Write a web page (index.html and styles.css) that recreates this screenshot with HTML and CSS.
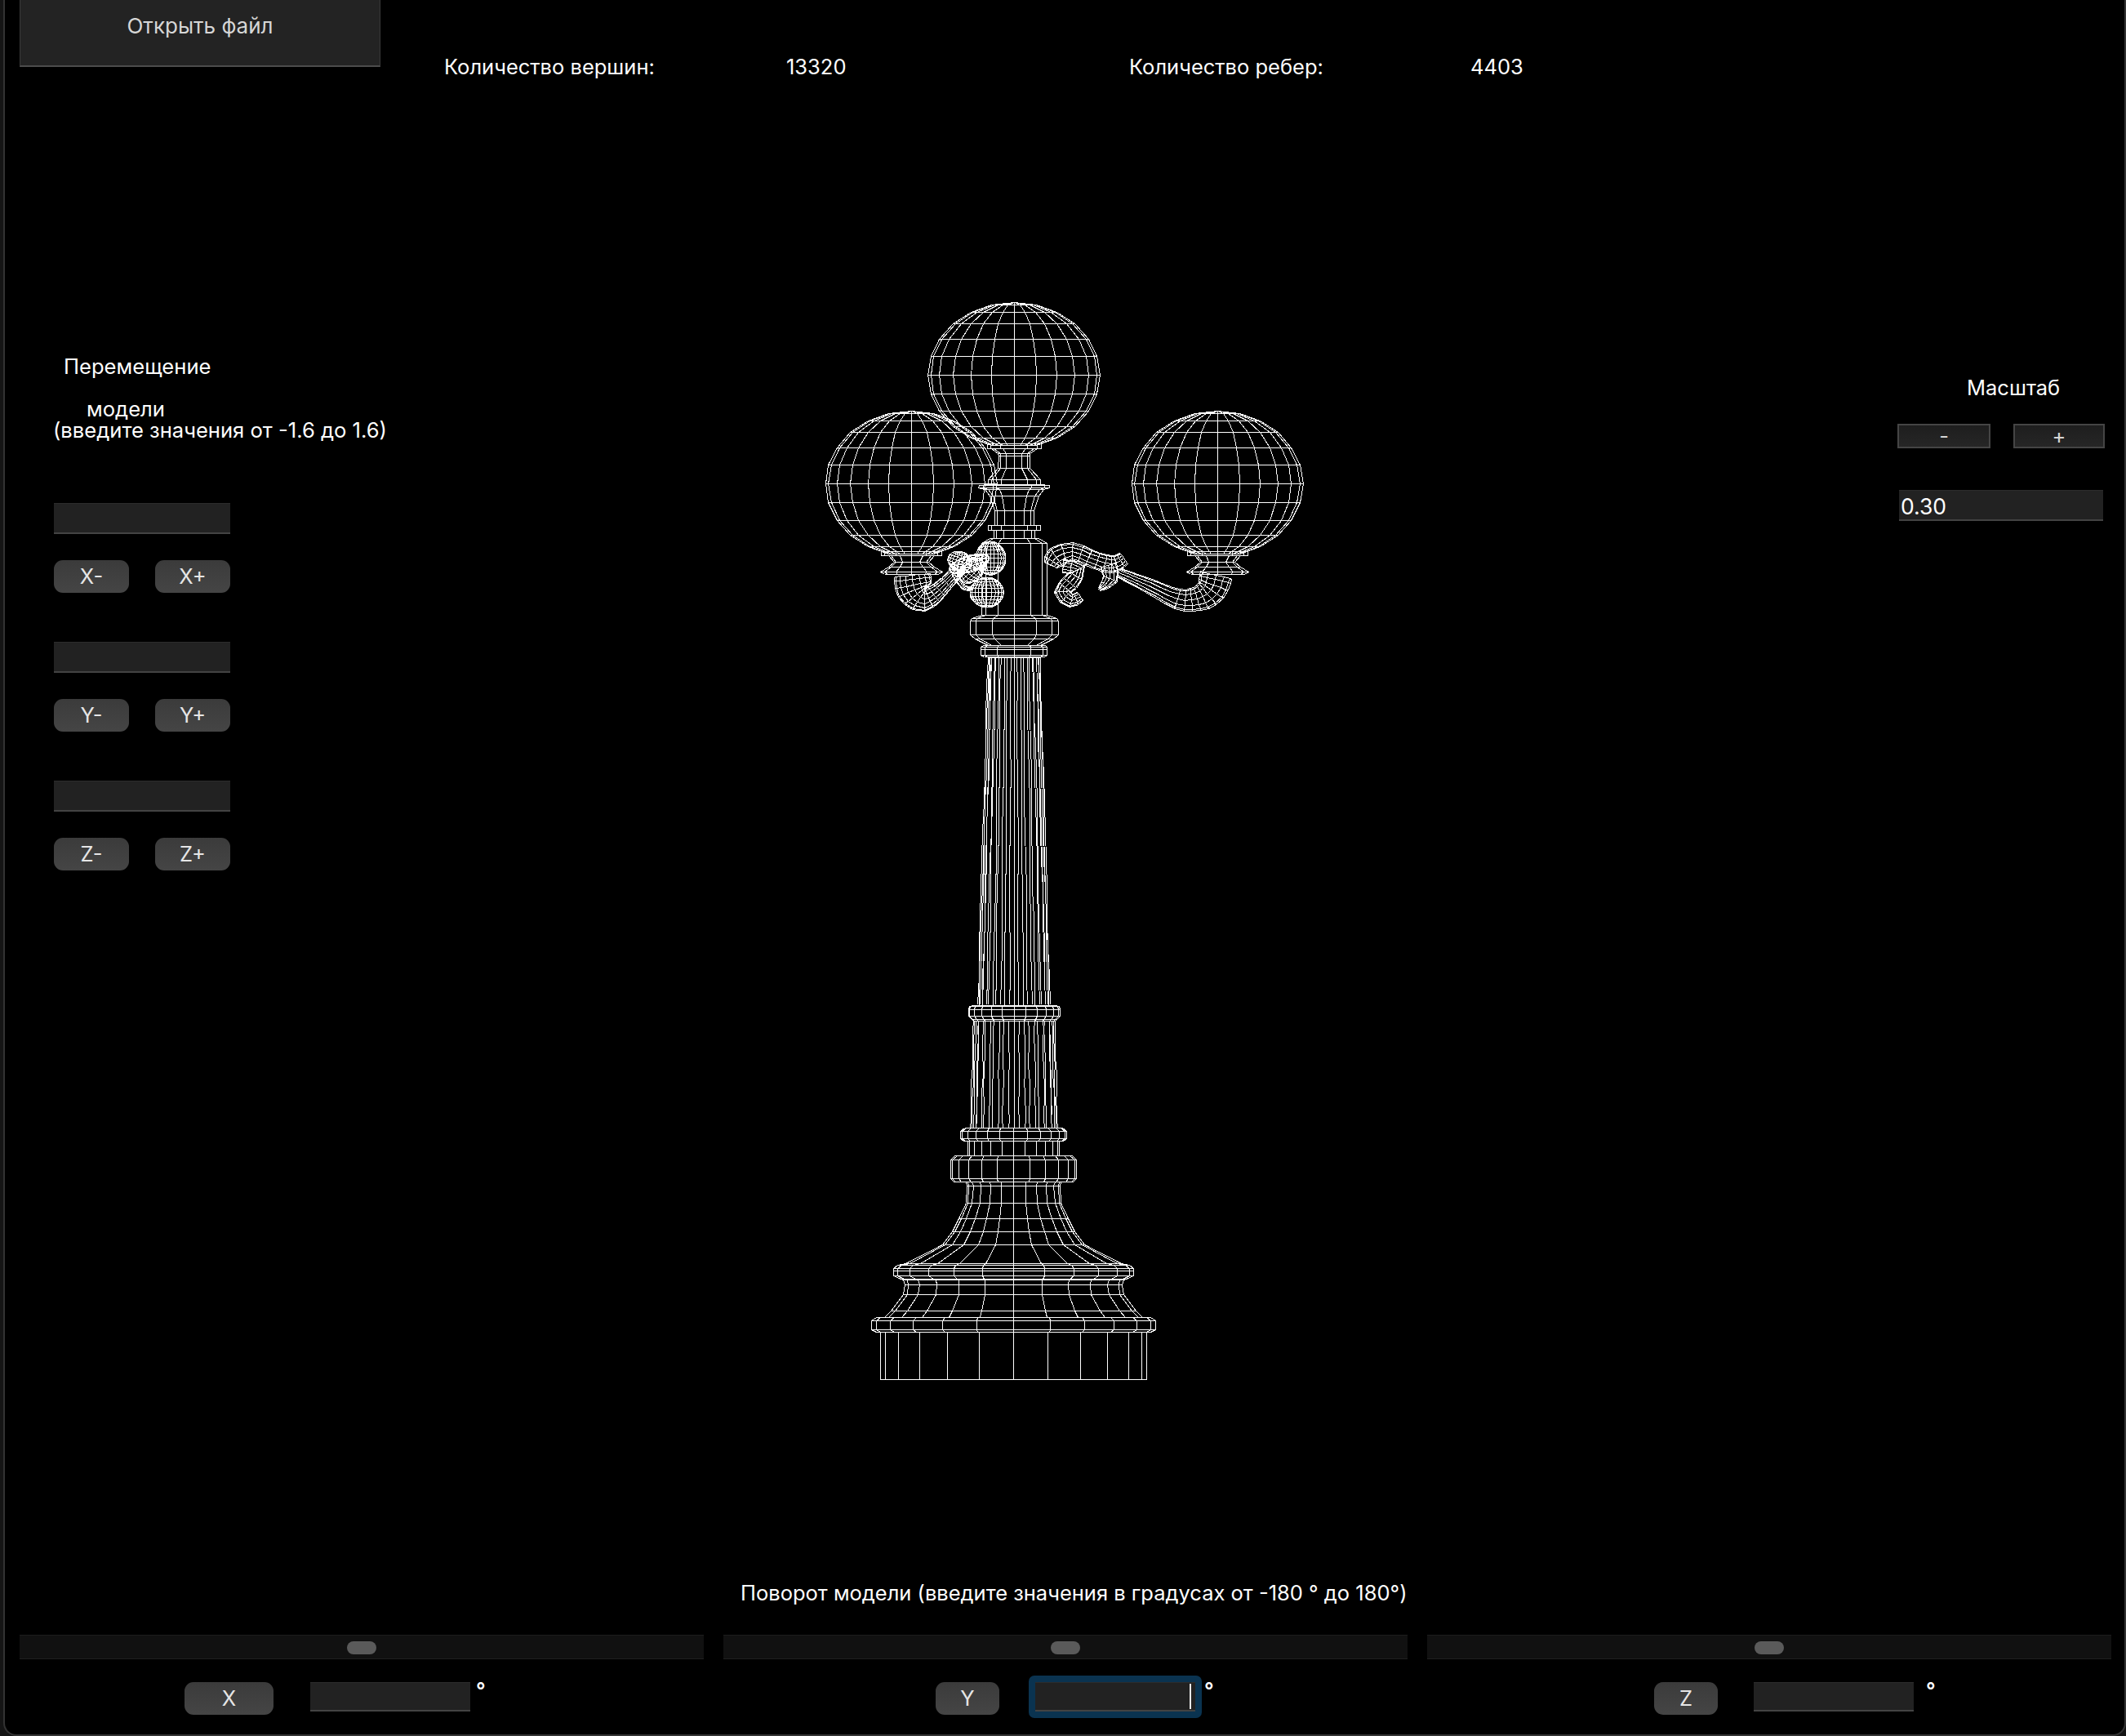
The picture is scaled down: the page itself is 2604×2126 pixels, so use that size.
FILE: index.html
```html
<!DOCTYPE html>
<html lang="ru">
<head>
<meta charset="utf-8">
<title>Просмотр модели</title>
<link rel="stylesheet" href="styles.css">
</head>
<body>
<div class="window">
  <header class="top">
    <button class="open-btn">Открыть файл</button>
    <div class="stats">
      <span>Количество вершин:</span>
      <span>13320</span>
      <span>Количество ребер:</span>
      <span>4403</span>
    </div>
  </header>

  <main class="main">
    <section class="move">
      <div class="move-title-a">Перемещение</div>
      <div class="move-title-b">модели</div>
      <div class="move-title-c">(введите значения от -1.6 до 1.6)</div>
      <div class="move-groups">
        <div class="move-group">
          <input class="field field-move" type="text">
          <div class="pair"><button class="key">X-</button><button class="key">X+</button></div>
        </div>
        <div class="move-group">
          <input class="field field-move" type="text">
          <div class="pair"><button class="key">Y-</button><button class="key">Y+</button></div>
        </div>
        <div class="move-group">
          <input class="field field-move" type="text">
          <div class="pair"><button class="key">Z-</button><button class="key">Z+</button></div>
        </div>
      </div>
    </section>

    <svg class="viewport" viewBox="980 350 640 1400" width="640" height="1400">
      <path id="wire" class="wire" d=""></path>
    </svg>

    <section class="scale">
      <div class="scale-title">Масштаб</div>
      <div class="scale-btns">
        <button class="flat-btn flat-minus">-</button>
        <button class="flat-btn flat-plus">+</button>
      </div>
      <input class="field field-scale" type="text" value="0.30">
    </section>
  </main>

  <footer class="rotate">
    <div class="rotate-title">Поворот модели (введите значения в градусах от -180 ° до 180°)</div>
    <div class="rotate-cols">
      <div class="rotate-col">
        <div class="track"><span class="thumb"></span></div>
        <div class="rotate-row row-x">
          <button class="key key-x">X</button>
          <input class="field field-rot" type="text">
          <span class="deg">°</span>
        </div>
      </div>
      <div class="rotate-col">
        <div class="track"><span class="thumb"></span></div>
        <div class="rotate-row row-y">
          <button class="key key-yz">Y</button>
          <span class="focus-ring">
            <input class="field field-rot" type="text">
            <span class="caret"></span>
          </span>
          <span class="deg">°</span>
        </div>
      </div>
      <div class="rotate-col">
        <div class="track"><span class="thumb"></span></div>
        <div class="rotate-row row-z">
          <button class="key key-yz">Z</button>
          <input class="field field-rot" type="text">
          <span class="deg">°</span>
        </div>
      </div>
    </div>
  </footer>
</div>
<script src="script.js"></script>
</body>
</html>
```
FILE: styles.css
```css
* { box-sizing: border-box; }
html, body { margin: 0; padding: 0; }
body {
  background: #151515;
  width: 2604px;
  height: 2126px;
  overflow: hidden;
  padding-left: 4px;
  font-family: "Inter", "Liberation Sans", sans-serif;
  font-size: 25.5px;
  color: #fff;
}
button, input { font-family: inherit; font-size: inherit; margin: 0; outline: none; }

.window {
  width: 2600px;
  height: 2126px;
  background: #000;
  border: 2px solid #333;
  border-top: 0;
  border-radius: 0 0 16px 16px;
  overflow: hidden;
}

/* top */
.top { display: flex; height: 148px; padding-left: 18px; }
.open-btn {
  width: 442px;
  height: 82px;
  background: #232323;
  color: #d6d6d6;
  border: 0;
  border-left: 1px solid #3a3a3a;
  border-right: 1px solid #3a3a3a;
  border-bottom: 2px solid #4c4c4c;
  padding: 0 0 18px;
  font-size: 26px;
}
.stats {
  display: grid;
  grid-template-columns: 419px 420px 418px auto;
  margin-left: 78px;
  height: 82px;
  padding-top: 67px;
  line-height: 30px;
}

/* main */
.main { display: grid; grid-template-columns: 974px 640px 982px; height: 1780px; }
.move { padding: 288px 0 0 60px; line-height: 26px; font-size: 25.6px; }
.move-title-a { margin-left: 12px; }
.move-title-b { margin: 26px 0 0 40px; }
.move-title-c { margin: 0 0 0 -1px; }
.move-groups { display: flex; flex-direction: column; gap: 60px; margin-top: 76px; font-size: 25.5px; }
.move-group { display: flex; flex-direction: column; gap: 32px; width: 216px; }
.pair { display: flex; justify-content: space-between; }

.field {
  display: block;
  background: #222;
  border: 0;
  border-top: 1px solid #2c2c2c;
  border-bottom: 2px solid #434343;
  color: #fff;
  padding: 0 2px;
  height: 38px;
}
.field-move { width: 216px; }
.field-rot { width: 196px; height: 36px; flex: none; }
.field-scale { width: 250px; margin-left: 2px; margin-top: 51px; font-size: 26.5px; padding-top: 2px; }

.key {
  width: 92px;
  height: 40px;
  background: linear-gradient(#3b3b3b, #454545);
  color: #e6e6e6;
  border: 0;
  border-radius: 11px;
  padding: 0;
  line-height: 38px;
}
.key-x { width: 109px; flex: none; }
.key-yz { width: 78px; flex: none; }

.viewport { display: block; margin-top: 202px; }
.wire { fill: none; stroke: #fff; stroke-width: 1; shape-rendering: crispEdges; }

.scale { padding: 314px 0 0 704px; line-height: 26px; }
.scale-title { margin-left: 85px; }
.scale-btns { display: flex; gap: 28px; margin-top: 31px; }
.flat-btn {
  height: 30px;
  background: linear-gradient(#1e1e1e, #262626);
  border: 2px solid #454545;
  color: #d6d6d6;
  padding: 0;
  line-height: 26px;
}
.flat-minus { width: 114px; }
.flat-plus { width: 112px; }

/* bottom */
.rotate { padding: 0 10px 0 18px; }
.rotate-title { height: 46px; line-height: 46px; padding-left: 883px; margin-bottom: 28px; white-space: nowrap; }
.rotate-cols { display: grid; grid-template-columns: repeat(3, 838px); gap: 24px; }
.track {
  display: flex;
  justify-content: center;
  padding-top: 7px;
  height: 30px;
  background: #111;
  border-top: 1px solid #1c1c1c;
  border-bottom: 1px solid #1f1f1f;
}
.thumb { width: 36px; height: 16px; background: #5a5a5a; border-radius: 8px; }
.rotate-row { display: flex; align-items: flex-start; margin-top: 28px; line-height: 26px; }
.deg { margin-top: -3px; font-weight: 600; }
.row-x { padding-left: 202px; }
.row-x .field-rot { margin-left: 45px; }
.row-x .deg { margin-left: 7px; }
.row-y { padding-left: 260px; }
.row-y .deg { margin-left: 3px; }
.row-z { padding-left: 278px; }
.row-z .field-rot { margin-left: 44px; }
.row-z .deg { margin-left: 15px; }
.focus-ring {
  display: block;
  position: relative;
  flex: none;
  width: 212px;
  height: 52px;
  margin: -8px 0 0 36px;
  padding: 8px 7px 8px 8px;
  background: #0a3350;
  border-radius: 7px;
}
.caret { position: absolute; left: 197px; top: 10px; width: 2px; height: 31px; background: #e8e8e8; }
```
FILE: script.js
```js
// Wireframe of the lamp model, projected orthographically.
var d = [];
var cx = 1241.5;
function q(v) { return Math.round(v) + 0.5; }
function poly(pts) {
  var s = '';
  for (var i = 0; i < pts.length; i++) {
    s += (i ? 'L' : 'M') + q(pts[i][0]) + ' ' + q(pts[i][1]);
  }
  d.push(s);
}
// profile: [y, r]; n: segments round the axis
function lathe(c, prof, n) {
  var i, k;
  for (i = 0; i < prof.length; i++) {
    poly([[c - prof[i][1], prof[i][0]], [c + prof[i][1], prof[i][0]]]);
  }
  var half = n / 2;
  for (k = -half / 2; k <= half / 2; k++) {
    var s = Math.sin(k * 2 * Math.PI / n);
    var line = [];
    for (i = 0; i < prof.length; i++) {
      line.push([c + prof[i][1] * s, prof[i][0]]);
    }
    poly(line);
  }
}
// fluted shaft: the flute lines wander slightly along their length
function flutes(c, y0, r0, y1, r1, n) {
  var half = n / 2, steps = 12;
  for (var k = -half / 2; k <= half / 2; k++) {
    var s = Math.sin(k * 2 * Math.PI / n);
    var f = Math.abs(k) % 2 === 1 ? 0.94 : 1;
    var line = [];
    for (var i = 0; i <= steps; i++) {
      var t = i / steps;
      var w = (k === 0 || i === 0 || i === steps) ? 0 : Math.sin(i * 0.9 + k * 2.3) * 0.55;
      line.push([c + (r0 + (r1 - r0) * t) * s * f + w, y0 + (y1 - y0) * t]);
    }
    poly(line);
  }
  poly([[c - r0, y0], [c + r0, y0]]);
}
function sphere(c, cy, rx, ry) {
  var prof = [];
  for (var lat = 90; lat >= -75; lat -= 15) {
    var a = lat * Math.PI / 180;
    prof.push([cy - ry * Math.sin(a), rx * Math.cos(a)]);
  }
  lathe(c, prof, 24);
}
function cr(a, b, c, e, t) {
  return 0.5 * (2 * b + (c - a) * t + (2 * a - 5 * b + 4 * c - e) * t * t + (3 * b - a - 3 * c + e) * t * t * t);
}
// tube along a spline; control points [x, y, r]
function tube(pts, nLong, sub, crossFrom) {
  var samples = [], i, j, m;
  for (i = 0; i < pts.length - 1; i++) {
    var p0 = pts[Math.max(i - 1, 0)], p1 = pts[i], p2 = pts[i + 1], p3 = pts[Math.min(i + 2, pts.length - 1)];
    for (j = 0; j < sub; j++) {
      var t = j / sub;
      samples.push([cr(p0[0], p1[0], p2[0], p3[0], t), cr(p0[1], p1[1], p2[1], p3[1], t), cr(p0[2], p1[2], p2[2], p3[2], t), i]);
    }
  }
  var last = pts[pts.length - 1];
  samples.push([last[0], last[1], last[2], pts.length - 1]);
  var rings = samples.map(function (p, idx) {
    var a = samples[Math.max(idx - 1, 0)], b = samples[Math.min(idx + 1, samples.length - 1)];
    var tx = b[0] - a[0], ty = b[1] - a[1], l = Math.sqrt(tx * tx + ty * ty) || 1;
    var ring = [];
    for (m = 0; m <= nLong; m++) {
      var w = Math.sin(-Math.PI / 2 + m * Math.PI / nLong) * p[2];
      ring.push([p[0] - ty / l * w, p[1] + tx / l * w]);
    }
    return { ring: ring, seg: p[3] };
  });
  for (m = 0; m <= nLong; m++) {
    poly(rings.map(function (r) { return r.ring[m]; }));
  }
  rings.forEach(function (r) {
    if (r.seg >= (crossFrom || 0)) poly(r.ring);
  });
}
// rotated ellipsoid mesh
function blob(c, cy, rx, ry, rot, n) {
  var cs = Math.cos(rot * Math.PI / 180), sn = Math.sin(rot * Math.PI / 180);
  function pt(x, y) { return [c + x * cs - y * sn, cy + x * sn + y * cs]; }
  var i, k, a, pts;
  for (k = 1; k < n; k++) {
    var lat = -Math.PI / 2 + k * Math.PI / n;
    pts = [];
    for (i = 0; i <= 8; i++) {
      a = -Math.PI / 2 + i * Math.PI / 8;
      pts.push(pt(rx * Math.cos(lat) * Math.sin(a), ry * Math.sin(lat)));
    }
    poly(pts);
  }
  for (k = -n / 2; k <= n / 2; k++) {
    a = k * Math.PI / n;
    pts = [];
    for (i = 0; i <= 12; i++) {
      var l2 = -Math.PI / 2 + i * Math.PI / 12;
      pts.push(pt(rx * Math.cos(l2) * Math.sin(a), ry * Math.sin(l2)));
    }
    poly(pts);
  }
}

// spheres
sphere(cx, 459, 105.4, 88.7);
sphere(1115.5, 592.2, 105, 89.2);
sphere(1490.5, 592.2, 105, 89.2);

// pedestal under the top sphere and the upper shaft
lathe(cx, [[543.3, 33], [549.3, 33], [549.3, 28], [555, 19.5], [558.3, 19], [573, 19.5], [586.7, 32], [592.7, 32],
  [594, 43], [597.3, 43.8], [599.3, 36], [606.7, 30], [625, 24], [642.7, 24], [642.7, 32], [649.3, 32],
  [649.3, 25], [659.3, 25], [659.3, 30], [665, 40], [752.7, 40], [756.7, 52], [760, 54], [776.7, 54],
  [781.7, 48], [790, 32], [790, 38], [792, 40.5], [795, 40.5], [801.7, 40.5], [804, 37]], 12);

// fluted shafts
flutes(cx, 805, 32, 1230, 44.5, 48);
flutes(cx, 1250, 50, 1380.7, 53.3, 48);

// ring between the shafts
lathe(cx, [[1230.7, 50], [1232, 55], [1236, 56], [1244, 56], [1248, 52], [1250, 50]], 24);

// base
var base = [[1468, 489], [1292, 489], [1292, 505], [1284, 522], [1252, 522], [1240, 505], [1238, 475], [1214, 450],
  [1156, 405], [1120, 400], [1100, 405], [1098, 415], [1085, 441], [1068, 441], [1058, 441], [1048, 425], [1040, 395],
  [973, 260], [925, 225], [876, 200], [820, 175], [755, 170], [742, 175], [740, 220], [730, 232], [660, 232],
  [646, 215], [646, 167], [592, 167], [592, 182], [582, 195], [556, 195], [542, 180]];
lathe(1241, base.map(function (p) { return [1200 + p[0] / 3, p[1] / 3]; }), 24);

// cups under the side spheres
var cup = [[675, 37], [680, 37], [680, 28], [688.3, 21], [694, 28], [700, 38], [703.3, 33]];
lathe(1115.5, cup, 12);
lathe(1490.5, cup, 12);

// right arm and elbow
tube([[1370, 701, 5.5], [1407, 717, 8.5], [1442, 733, 12], [1466, 733, 15], [1483, 722, 18], [1489, 704, 20]], 6, 3, 2);
// left arm and elbow
tube([[1117, 704, 22], [1120, 722, 22], [1132, 733, 15], [1150, 722, 10], [1176, 695, 7]], 8, 3, 0);

// right scroll
function z10(p) { return [1270 + p[0] / 3, 650 + p[1] / 3, p[2] / 3]; }
tube([[50, 125, 26], [70, 95, 40], [130, 75, 32], [190, 97, 30], [250, 118, 32], [290, 118, 30], [318, 100, 24]].map(z10), 6, 2, 0);
tube([[262, 125, 30], [268, 175, 28], [228, 214, 6]].map(z10), 6, 2, 0);
tube([[95, 130, 24], [150, 140, 26], [120, 190, 30], [92, 222, 28], [125, 255, 26], [158, 240, 18]].map(z10), 6, 2, 0);

// left scroll: overlapping lobes
function z9(p) { return [1130 + p[0] / 3, 640 + p[1] / 3]; }
function zb(x, y, rx, ry, rot, n) { var c = z9([x, y]); blob(c[0], c[1], rx / 3, ry / 3, rot, n); }
zb(248, 130, 56, 62, 0, 12);
zb(235, 255, 62, 55, 0, 12);
zb(135, 140, 45, 35, 20, 10);
zb(180, 175, 54, 38, -45, 10);
zb(170, 150, 78, 30, -18, 10);
function z9t(p) { var c = z9(p); return [c[0], c[1], p[2] / 3]; }
tube([[115, 185, 10], [150, 238, 8], [178, 240, 6]].map(z9t), 4, 2, 0);

document.getElementById('wire').setAttribute('d', d.join(''));
```
